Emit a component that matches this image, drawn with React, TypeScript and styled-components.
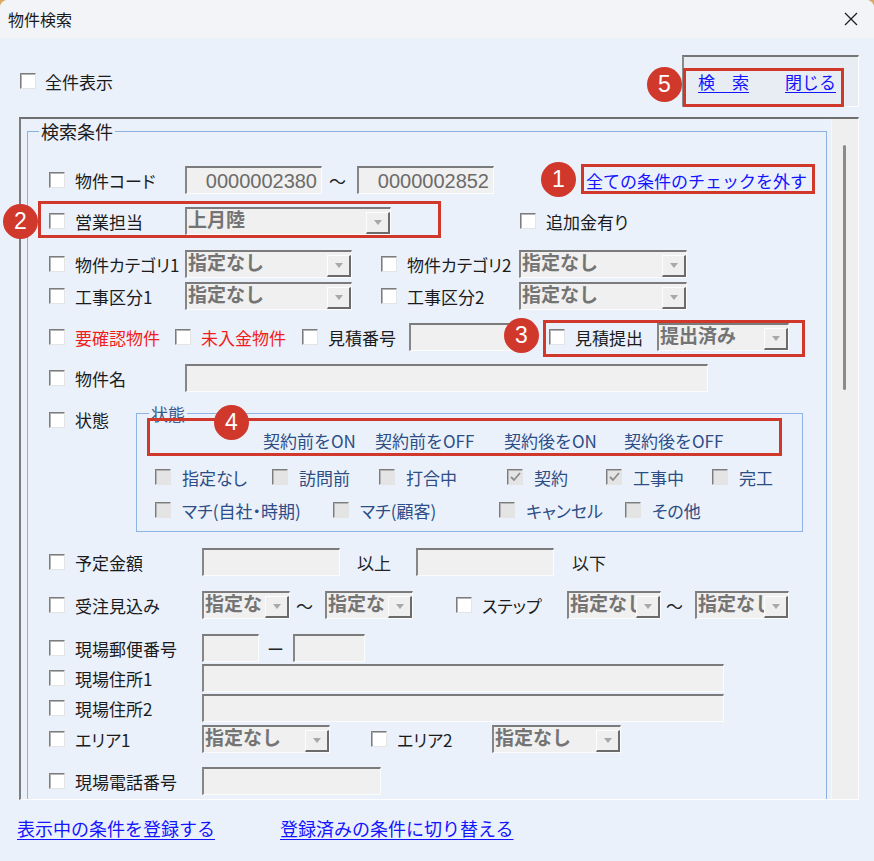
import React from 'react';
import styled, { createGlobalStyle } from 'styled-components';

const GlobalStyle = createGlobalStyle`
  html, body {
    margin: 0;
    padding: 0;
    background: #d9a862;
  }
  body {
    font-family: "Noto Sans CJK JP", "Noto Sans", sans-serif;
  }
  * {
    box-sizing: border-box;
  }
`;

const Window = styled.div`
  position: relative;
  width: 874px;
  height: 861px;
  background: #eaf1fb;
  border-radius: 8px 8px 0 0;
  overflow: hidden;
  color: #1b1b1b;
  font-size: 17px;
  line-height: 1;
`;

const TitleBar = styled.div`
  height: 38px;
  display: flex;
  align-items: center;
  justify-content: space-between;
  padding: 0 16px 0 8px;
  background: #f2f4f7;
  font-size: 16px;
`;

const TopRow = styled.div`
  display: flex;
  align-items: center;
  justify-content: space-between;
  height: 52px;
  margin: 17px 15px 10px 20px;
`;

const LinkFrame = styled.div`
  width: 177px;
  height: 52px;
  display: flex;
  align-items: center;
  padding-left: 14px;
  background: #e8edf3;
  border-style: solid;
  border-width: 2px 1px 1px 2px;
  border-color: #767676 #fdfdfd #fdfdfd #8b8b8b;
`;

const Link = styled.a<{ $size?: number; $w?: number }>`
  flex: none;
  width: ${p => (p.$w ? `${p.$w}px` : 'auto')};
  color: #1414ff;
  font-size: ${p => p.$size ?? 17}px;
  text-decoration: underline;
  text-underline-offset: 3px;
  white-space: nowrap;
  cursor: pointer;
`;

const Panel = styled.div`
  display: flex;
  width: 840px;
  height: 683px;
  margin-left: 19px;
  overflow: hidden;
  border-style: solid;
  border-width: 2px 1px 1px 2px;
  border-color: #6f6f6f #fdfdfd #fdfdfd #7d7d7d;
`;

const PanelContent = styled.div`
  flex: 1;
  padding: 2px 0 0 6px;
`;

const Scrollbar = styled.div`
  flex: none;
  width: 27px;
  padding: 26px 0 0 11px;
  background: #efefef;
  border-left: 1px solid #f7f7f7;
`;

const Thumb = styled.div`
  width: 3px;
  height: 245px;
  border-radius: 2px;
  background: #8b8b8b;
`;

const Group = styled.fieldset<{ $w: number; $line: string }>`
  width: ${p => p.$w}px;
  margin: 0;
  padding: 0;
  border: 1px solid ${p => p.$line};
  flex: none;
`;

const Legend = styled.legend<{ $color: string; $indent: number; $size: number }>`
  margin-left: ${p => p.$indent}px;
  padding: 0 2px;
  font-size: ${p => p.$size}px;
  line-height: ${p => p.$size + 2}px;
  color: ${p => p.$color};
`;

const GroupBody = styled.div`
  padding: 0 0 40px 21px;
`;

const Row = styled.div<{ $mt: number; $top?: boolean }>`
  display: flex;
  align-items: ${p => (p.$top ? 'flex-start' : 'center')};
  min-height: 28px;
  margin-top: ${p => p.$mt}px;
`;

const Cell = styled.div<{ $w?: number; $gap?: number; $mt?: number }>`
  flex: none;
  display: flex;
  align-items: center;
  gap: ${p => p.$gap ?? 10}px;
  width: ${p => (p.$w ? `${p.$w}px` : 'auto')};
  margin-top: ${p => p.$mt ?? 0}px;
  white-space: nowrap;
`;

const Spacer = styled.div<{ $w: number }>`
  flex: none;
  width: ${p => p.$w}px;
`;

const Box = styled.span<{ $gray?: boolean }>`
  flex: none;
  width: 16px;
  height: 16px;
  display: flex;
  align-items: center;
  justify-content: center;
  background: ${p => (p.$gray ? '#e4e4e4' : '#ffffff')};
  border: 1px solid;
  border-color: #7c7c7c #e4e4e4 #e4e4e4 #7c7c7c;
  box-shadow: inset 1px 1px 0 #b4b4b4;
`;

const Label = styled.span<{ $color?: string; $size?: number }>`
  color: ${p => p.$color ?? '#1b1b1b'};
  font-size: ${p => p.$size ?? 17}px;
  font-feature-settings: "palt";
`;

const Sep = styled.span<{ $w: number; $pad: number }>`
  flex: none;
  width: ${p => p.$w}px;
  padding-left: ${p => p.$pad}px;
  font-size: 17px;
  color: #222;
`;

const Field = styled.div<{ $w: number }>`
  flex: none;
  width: ${p => p.$w}px;
  height: 28px;
  display: flex;
  align-items: center;
  justify-content: flex-end;
  padding: 0 4px 0 2px;
  background: #f0f0f0;
  border-style: solid;
  border-width: 2px 1px 1px 2px;
  border-color: #7b7b7b #fcfcfc #fcfcfc #868686;
  color: #6b6b6b;
  font-family: "Liberation Sans", "Noto Sans", sans-serif;
  font-size: 20px;
`;

const Combo = styled.div<{ $w: number }>`
  flex: none;
  width: ${p => p.$w}px;
  height: 28px;
  display: flex;
  align-items: center;
  background: #f0f0f0;
  border-style: solid;
  border-width: 2px 1px 1px 2px;
  border-color: #7b7b7b #fcfcfc #fcfcfc #868686;
`;

const ComboText = styled.span<{ $clip?: boolean }>`
  flex: 1;
  min-width: 0;
  overflow-x: ${p => (p.$clip ? 'clip' : 'visible')};
  white-space: nowrap;
  padding-left: 1px;
  margin-top: -2px;
  color: #747474;
  font-family: "Liberation Sans", "Noto Sans CJK JP", sans-serif;
  font-size: 19px;
  font-weight: 700;
  line-height: 20px;
`;

const DropButton = styled.span`
  flex: none;
  align-self: stretch;
  width: 24px;
  margin-top: 3px;
  display: flex;
  align-items: center;
  justify-content: center;
  background: #efefef;
  border-style: solid;
  border-width: 1px 2px 2px 1px;
  border-color: #fdfdfd #6b6b6b #6b6b6b #fdfdfd;

  &::before {
    content: '';
    border-left: 4px solid transparent;
    border-right: 4px solid transparent;
    border-top: 5px solid #a8a8a8;
  }
`;

const StateBody = styled.div`
  padding: 0 0 9px 18px;
`;

const ActionRow = styled.div`
  display: flex;
  align-items: center;
  height: 24px;
  margin-top: 5px;
  padding-left: 108px;
`;

const Action = styled.span<{ $w?: number }>`
  flex: none;
  width: ${p => (p.$w ? `${p.$w}px` : 'auto')};
  color: #2d4d86;
  font-size: 17px;
  white-space: nowrap;
  cursor: pointer;
`;

const StateRow = styled.div<{ $mt: number }>`
  display: flex;
  align-items: center;
  height: 24px;
  margin-top: ${p => p.$mt}px;
`;

const BottomLinks = styled.div`
  display: flex;
  align-items: center;
  height: 24px;
  margin-top: 16px;
  padding-left: 17px;
`;

const Mark = styled.div`
  position: absolute;
  border: 3px solid #d1382c;
  pointer-events: none;
`;

const Badge = styled.div`
  position: absolute;
  width: 35px;
  height: 35px;
  margin: -17px 0 0 -17px;
  border-radius: 50%;
  background: #d1382c;
  color: #fff;
  display: flex;
  align-items: center;
  justify-content: center;
  font-family: "Liberation Sans", "Noto Sans", sans-serif;
  font-size: 23px;
`;

type CheckProps = {
  label: string;
  w?: number;
  color?: string;
  gray?: boolean;
  checked?: boolean;
  gap?: number;
  mt?: number;
  size?: number;
};

const Check: React.FC<CheckProps> = ({ label, w, color, gray, checked, gap, mt, size }) => (
  <Cell $w={w} $gap={gap} $mt={mt}>
    <Box $gray={gray}>
      {checked && (
        <svg width="11" height="10" viewBox="0 0 11 10">
          <polyline points="1,5 4,8 10,1" fill="none" stroke="#8c8c8c" strokeWidth="1.8" />
        </svg>
      )}
    </Box>
    <Label $color={color} $size={size}>{label}</Label>
  </Cell>
);

// narrow combos cut their text off, as the real control does
const Select: React.FC<{ w: number; value: string }> = ({ w, value }) => (
  <Combo $w={w}>
    <ComboText $clip={w < 110}>{value}</ComboText>
    <DropButton />
  </Combo>
);

const RED = '#f21c1c';
const STATE = '#2d4d86';

const marks = [
  { n: 1, box: [581, 164, 234, 30], c: [558, 179] },
  { n: 2, box: [38, 201, 403, 37], c: [20, 221] },
  { n: 3, box: [543, 320, 262, 37], c: [521, 335] },
  { n: 4, box: [147, 418, 635, 38], c: [231, 422] },
  { n: 5, box: [683, 68, 161, 39], c: [664, 84] },
];

const App: React.FC = () => {
  return (
    <Window>
      <GlobalStyle />
      <TitleBar>
        <span>物件検索</span>
        <svg width="14" height="14" viewBox="0 0 14 14">
          <path d="M1 1 L13 13 M13 1 L1 13" stroke="#1f1f1f" strokeWidth="1.3" />
        </svg>
      </TitleBar>

      <TopRow>
        <Check label="全件表示" gap={9} />
        <LinkFrame>
          <Link $w={87}>検　索</Link>
          <Link>閉じる</Link>
        </LinkFrame>
      </TopRow>

      <Panel>
        <PanelContent>
          <Group $w={800} $line="#8bb0e2">
            <Legend $color="#1b1b1b" $indent={11} $size={18}>検索条件</Legend>
            <GroupBody>
              <Row $mt={25}>
                <Check label="物件コード" w={136} />
                <Field $w={137}>0000002380</Field>
                <Sep $w={35} $pad={7}>〜</Sep>
                <Field $w={137}>0000002852</Field>
                <Spacer $w={92} />
                <Link>全ての条件のチェックを外す</Link>
              </Row>

              <Row $mt={13}>
                <Check label="営業担当" w={136} />
                <Select w={206} value="上月陸" />
                <Spacer $w={129} />
                <Check label="追加金有り" />
              </Row>

              <Row $mt={15}>
                <Check label="物件カテゴリ1" w={136} />
                <Select w={167} value="指定なし" />
                <Spacer $w={29} />
                <Check label="物件カテゴリ2" w={138} />
                <Select w={168} value="指定なし" />
              </Row>

              <Row $mt={4}>
                <Check label="工事区分1" w={136} />
                <Select w={167} value="指定なし" />
                <Spacer $w={29} />
                <Check label="工事区分2" w={138} />
                <Select w={168} value="指定なし" />
              </Row>

              <Row $mt={13}>
                <Check label="要確認物件" w={126} color={RED} />
                <Check label="未入金物件" w={127} color={RED} />
                <Check label="見積番号" w={107} />
                <Field $w={105} />
                <Spacer $w={35} />
                <Check label="見積提出" w={108} />
                <Select w={132} value="提出済み" />
              </Row>

              <Row $mt={13}>
                <Check label="物件名" w={136} />
                <Field $w={523} />
              </Row>

              <Row $mt={12} $top>
                <Check label="状態" w={87} mt={7} />
                <Group $w={667} $line="#8db4e6">
                  <Legend $color="#3a5a8e" $indent={12} $size={17}>状態</Legend>
                  <StateBody>
                    <ActionRow>
                      <Action $w={112}>契約前をON</Action>
                      <Action $w={129}>契約前をOFF</Action>
                      <Action $w={120}>契約後をON</Action>
                      <Action>契約後をOFF</Action>
                    </ActionRow>
                    <StateRow $mt={13}>
                      <Check label="指定なし" w={117} gray color={STATE} gap={11} />
                      <Check label="訪問前" w={107} gray color={STATE} gap={11} />
                      <Check label="打合中" w={128} gray color={STATE} gap={11} />
                      <Check label="契約" w={99} gray checked color={STATE} gap={11} />
                      <Check label="工事中" w={106} gray checked color={STATE} gap={11} />
                      <Check label="完工" gray color={STATE} gap={11} />
                    </StateRow>
                    <StateRow $mt={9}>
                      <Check label="マチ(自社・時期)" w={178} gray color={STATE} gap={11} />
                      <Check label="マチ(顧客)" w={166} gray color={STATE} gap={11} />
                      <Check label="キャンセル" w={126} gray color={STATE} gap={11} />
                      <Check label="その他" gray color={STATE} gap={11} />
                    </StateRow>
                  </StateBody>
                </Group>
              </Row>

              <Row $mt={16}>
                <Check label="予定金額" w={153} />
                <Field $w={138} />
                <Sep $w={76} $pad={17}>以上</Sep>
                <Field $w={138} />
                <Sep $w={60} $pad={18}>以下</Sep>
              </Row>

              <Row $mt={15}>
                <Check label="受注見込み" w={153} />
                <Select w={88} value="指定なし" />
                <Sep $w={35} $pad={6}>〜</Sep>
                <Select w={88} value="指定なし" />
                <Spacer $w={43} />
                <Check label="ステップ" w={111} />
                <Select w={94} value="指定なし" />
                <Sep $w={34} $pad={5}>〜</Sep>
                <Select w={94} value="指定なし" />
              </Row>

              <Row $mt={15}>
                <Check label="現場郵便番号" w={153} />
                <Field $w={57} />
                <Sep $w={34} $pad={8}>ー</Sep>
                <Field $w={72} />
              </Row>

              <Row $mt={2}>
                <Check label="現場住所1" w={153} />
                <Field $w={522} />
              </Row>

              <Row $mt={2}>
                <Check label="現場住所2" w={153} />
                <Field $w={522} />
              </Row>

              <Row $mt={3}>
                <Check label="エリア1" w={153} />
                <Select w={128} value="指定なし" />
                <Spacer $w={41} />
                <Check label="エリア2" w={121} />
                <Select w={129} value="指定なし" />
              </Row>

              <Row $mt={14}>
                <Check label="現場電話番号" w={153} />
                <Field $w={179} />
              </Row>
            </GroupBody>
          </Group>
        </PanelContent>
        <Scrollbar>
          <Thumb />
        </Scrollbar>
      </Panel>

      <BottomLinks>
        <Link $size={18} $w={263}>表示中の条件を登録する</Link>
        <Link $size={18}>登録済みの条件に切り替える</Link>
      </BottomLinks>

      {marks.map(m => (
        <React.Fragment key={m.n}>
          <Mark style={{ left: m.box[0], top: m.box[1], width: m.box[2], height: m.box[3] }} />
          <Badge style={{ left: m.c[0], top: m.c[1] }}>{m.n}</Badge>
        </React.Fragment>
      ))}
    </Window>
  );
};

export default App;
